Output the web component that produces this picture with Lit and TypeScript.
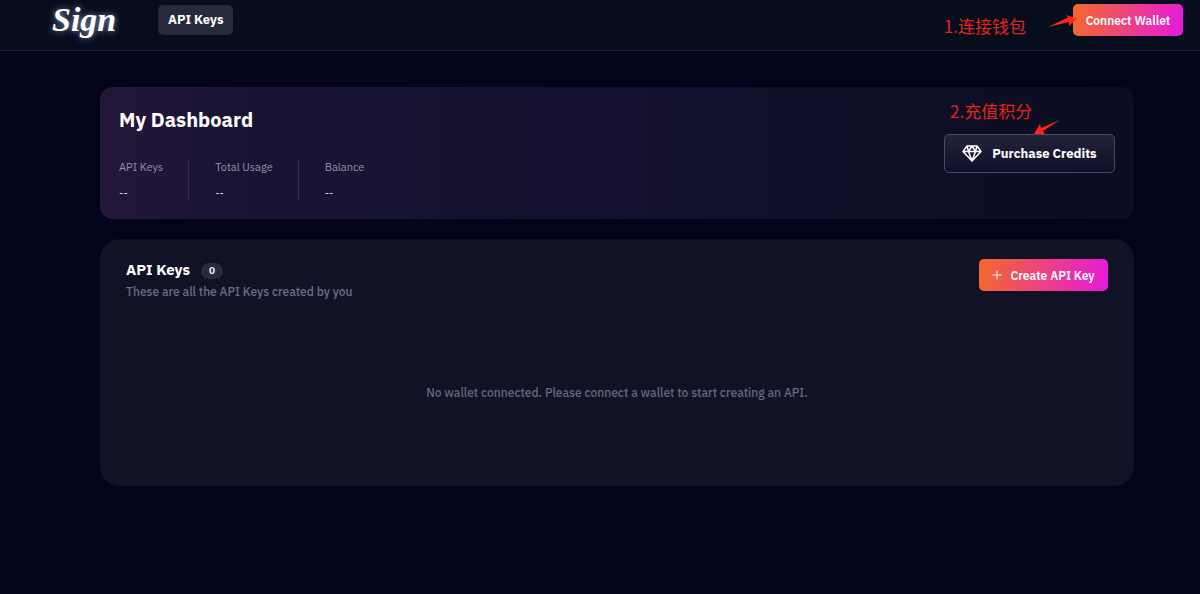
import { LitElement, html, css, svg } from "lit";
import { customElement, property } from "lit/decorators.js";

const gem = svg`
  <path d="M5 3h10l4 5.500-9 9.500L1 8.500z M1 8.500h18 M5 3L6.500 8.500 10 18 13.500 8.500 15 3 M6.500 8.500L10 3 13.500 8.500"
    fill="none" stroke="currentColor" stroke-width="1.5" stroke-linejoin="round" stroke-linecap="round"/>`;

@customElement("stat-item")
export class StatItem extends LitElement {
  @property() label = "";
  @property() value = "--";

  static styles = css`
    :host { display: block; }
    .label { font-size: 11px; line-height: 14px; color: #9293aa; }
    .value { margin-top: 12px; font-size: 11px; line-height: 14px; color: #d3d3e0; }
  `;

  render() {
    return html`<div class="label">${this.label}</div><div class="value">${this.value}</div>`;
  }
}

@customElement("app-root")
export class AppRoot extends LitElement {
  static styles = css`
    :host {
      display: block;
      min-height: 100vh;
      background: #03031a;
      color: #fff;
      font-family: "IBM Plex Sans", "Noto Sans", "Noto Sans CJK SC", sans-serif;
      font-size: 12px;
    }
    * { box-sizing: border-box; }
    h1, h2, p { margin: 0; }
    button { font-family: inherit; color: #fff; cursor: pointer; border: 0; white-space: nowrap; }
    svg { display: block; flex: none; }

    .topbar {
      display: flex;
      align-items: center;
      height: 51px;
      padding: 0 17px 10px 50px;
      background: #060d1d;
      border-bottom: 1px solid #1a1f2e;
    }
    .logo {
      width: 108px;
      padding-left: 2px;
      color: #fff;
      text-decoration: none;
      font: italic 700 34px/40px "Liberation Serif", serif;
      text-shadow: 0 0 6px rgba(190, 205, 255, 0.7);
    }
    .tab {
      display: block;
      padding: 0 10px;
      border-radius: 5px;
      background: #262a3b;
      color: #fff;
      font-size: 13px;
      font-weight: 700;
      line-height: 30px;
      text-decoration: none;
    }
    .anchor { position: relative; }
    .topbar .anchor { margin-left: auto; }

    .primary {
      display: flex;
      align-items: center;
      justify-content: center;
      gap: 8px;
      height: 32px;
      border-radius: 5px;
      background: linear-gradient(100deg, #f26a2a, #e619dc);
      font-size: 12px;
      font-weight: 600;
    }
    .connect { width: 110px; }
    .create { width: 129px; }

    .note {
      position: absolute;
      color: #e3241b;
      font: 17px/24px "Noto Sans CJK SC", sans-serif;
      white-space: nowrap;
    }
    .note-connect { right: 157px; top: 10px; }
    .note-credits { left: 6px; top: -35px; }
    .arrow { position: absolute; fill: #ff2617; }
    .arrow-connect { left: -25px; top: 10px; }
    .arrow-credits { left: 90px; top: -14px; }

    main {
      display: flex;
      flex-direction: column;
      gap: 20px;
      padding: 36px 66px 36px 100px;
    }
    .summary {
      display: flex;
      align-items: center;
      justify-content: space-between;
      padding: 19px;
      border-radius: 13px;
      background: linear-gradient(90deg, #24173a 0%, #191433 14%, #13112f 50%, #0e0e26 80%, #0c0c22 100%);
    }
    h1 { font-size: 20px; font-weight: 700; line-height: 28px; }
    .stats { display: flex; margin-top: 26px; }
    stat-item + stat-item { margin-left: 25px; padding-left: 26px; border-left: 1px solid #302c48; }

    .purchase {
      display: flex;
      align-items: center;
      justify-content: center;
      gap: 10px;
      width: 171px;
      height: 39px;
      border: 1px solid #4b4a60;
      border-radius: 5px;
      background: linear-gradient(#25233a, #100f2a);
      font-size: 13px;
      font-weight: 700;
    }

    .keys {
      display: flex;
      flex-direction: column;
      min-height: 247px;
      padding: 20px 26px;
      border-radius: 20px;
      background: #121226;
    }
    .keys-head { display: flex; align-items: flex-start; justify-content: space-between; }
    .keys-title { display: flex; align-items: center; gap: 11px; }
    h2 { font-size: 15px; font-weight: 700; line-height: 22px; }
    .count {
      margin-top: 2px;
      padding: 0 8px;
      border-radius: 8px;
      background: #2a2a3d;
      font-size: 10px;
      font-weight: 600;
      line-height: 16px;
    }
    .sub { font-size: 12px; line-height: 22px; color: #6b6d88; }
    .empty {
      flex: 1;
      display: flex;
      align-items: center;
      justify-content: center;
      padding-top: 16px;
      text-align: center;
      color: #66677e;
    }
    .sub, .empty { font-weight: 500; }
  `;

  render() {
    return html`
      <header class="topbar">
        <a class="logo" href="#">Sign</a>
        <nav><a class="tab" href="#keys">API Keys</a></nav>
        <div class="anchor">
          <button class="primary connect">Connect Wallet</button>
          <span class="note note-connect">1.连接钱包</span>
          <svg class="arrow arrow-connect" width="30" height="14" viewBox="0 0 30 14" aria-hidden="true">
            <path d="M0 13L20 3.500 18 1 29 4.500 21 12 21 8z"/>
          </svg>
        </div>
      </header>
      <main>
        <section class="summary">
          <div>
            <h1>My Dashboard</h1>
            <div class="stats">
              <stat-item label="API Keys"></stat-item>
              <stat-item label="Total Usage"></stat-item>
              <stat-item label="Balance"></stat-item>
            </div>
          </div>
          <div class="anchor">
            <button class="purchase">
              <svg width="20" height="20" viewBox="0 0 20 20" aria-hidden="true">${gem}</svg>
              Purchase Credits
            </button>
            <span class="note note-credits">2.充值积分</span>
            <svg class="arrow arrow-credits" width="26" height="15" viewBox="0 0 26 15" aria-hidden="true">
              <path d="M26 0L7 8 6 4 0 14 11 14 9 11z"/>
            </svg>
          </div>
        </section>
        <section class="keys" id="keys">
          <div class="keys-head">
            <div>
              <div class="keys-title"><h2>API Keys</h2><span class="count">0</span></div>
              <p class="sub">These are all the API Keys created by you</p>
            </div>
            <button class="primary create">
              <svg width="10" height="10" viewBox="0 0 10 10" aria-hidden="true">
                <path d="M5 0.500v9M0.500 5h9" stroke="currentColor" fill="none"/>
              </svg>
              Create API Key
            </button>
          </div>
          <p class="empty">No wallet connected. Please connect a wallet to start creating an API.</p>
        </section>
      </main>
    `;
  }
}
